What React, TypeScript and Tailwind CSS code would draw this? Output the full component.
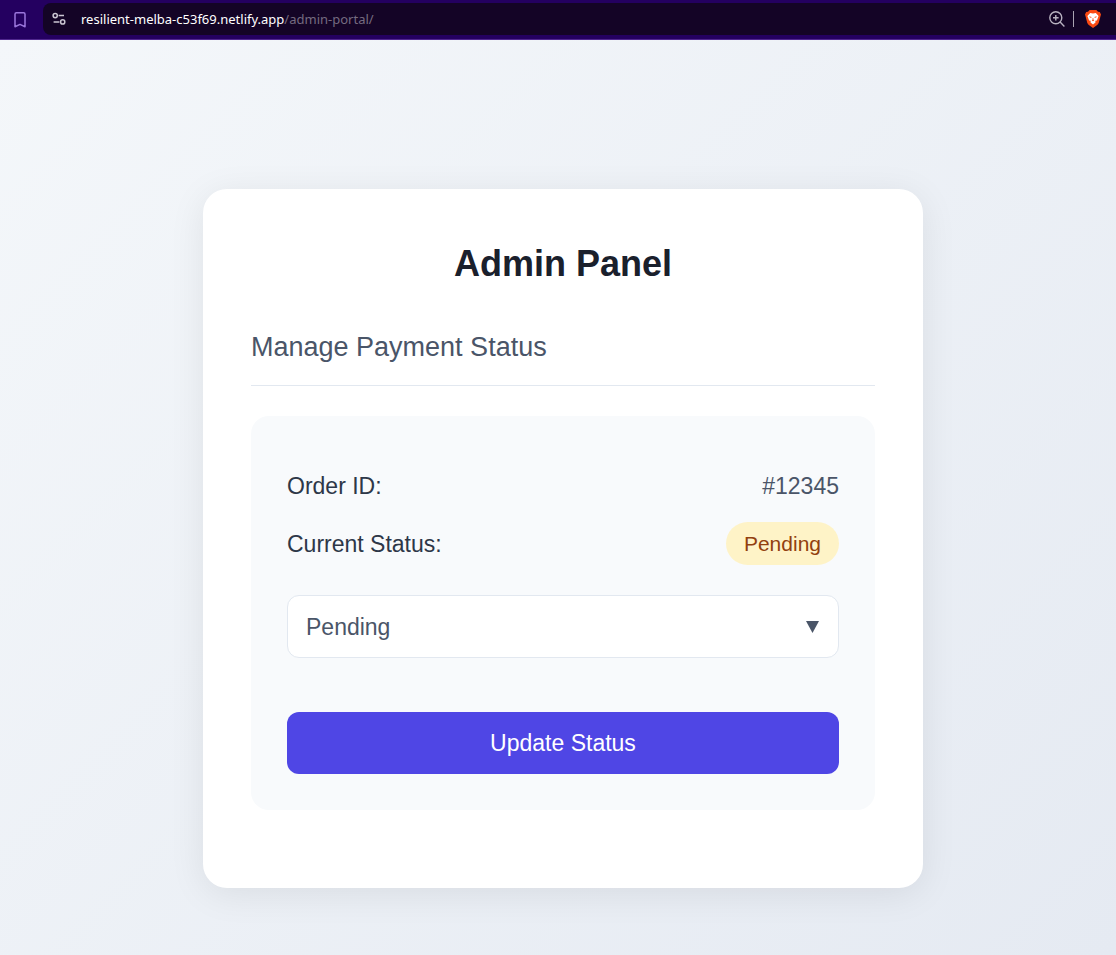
import { useState } from "react";

function BookmarkIcon() {
  return (
    <svg width="12" height="16" viewBox="0 0 12 16" fill="none" stroke="#9b76dc" strokeWidth="1.5" strokeLinejoin="round" aria-hidden="true">
      <path d="M1 2.2Q1 .8 2.4.8H9.6Q11 .8 11 2.2V14.8L6 12.4L1 14.8Z" />
    </svg>
  );
}

function SiteSettingsIcon() {
  return (
    <svg width="14" height="14" viewBox="0 0 14 14" fill="none" stroke="#cbc6d2" strokeWidth="1.5" aria-hidden="true">
      <circle cx="3.2" cy="3.6" r="2.1" />
      <path d="M6.6 3.6H12M1.6 9.9H7.4" />
      <circle cx="10.7" cy="9.9" r="2.1" />
    </svg>
  );
}

function ZoomInIcon() {
  return (
    <svg width="16" height="16" viewBox="0 0 16 16" fill="none" stroke="#b8b2c0" strokeWidth="1.4" aria-hidden="true">
      <circle cx="6.8" cy="6.8" r="6" />
      <path d="M11.1 11.1L15.4 15.4M6.8 4V9.6M4 6.8H9.6" />
    </svg>
  );
}

function ShieldLionIcon() {
  return (
    <svg width="16" height="18" viewBox="0 0 16 18" aria-hidden="true">
      <path d="M4.6 0H11.4L13 1.8L14.8 2L16 4.6L15.4 6.4L13.7 13L12.5 14.8L8 18L3.5 14.8L2.3 13L.6 6.4L0 4.6L1.2 2L3 1.8Z" fill="#fb4a12" />
      <path d="M5.2 3.1L8 3.6L10.8 3.1L13.6 6.1L12.9 7.8L11.9 10.4L10.3 10.8L10.5 12.4L8 14.5L5.5 12.4L5.7 10.8L4.1 10.4L3.1 7.8L2.4 6.1Z" fill="#fff" />
      <path d="M4.2 6.3L6.6 6.9L6.3 7.7L4.9 7.4ZM11.8 6.3L9.4 6.9L9.7 7.7L11.1 7.4ZM7.7 8H8.3L8.5 9.8L9.2 10.5L8 11.2L6.8 10.5L7.5 9.8Z" fill="#fb4a12" />
    </svg>
  );
}

function AddressBar() {
  return (
    <header className="flex h-10 items-center border-b border-[#50278e] bg-[#240060] pl-3.5 font-['Noto_Sans','Open_Sans',sans-serif]">
      <button type="button" aria-label="Bookmark this page" className="mr-[17px] flex w-3">
        <BookmarkIcon />
      </button>
      <div className="mb-0.5 flex h-8 min-w-0 flex-1 items-center rounded-l-lg bg-[#140426] pr-[15px] pl-[9px]">
        <button type="button" aria-label="Site settings" className="mr-[15px]">
          <SiteSettingsIcon />
        </button>
        <p className="min-w-0 flex-1 truncate text-[13px] leading-5 text-[#756b80]">
          <span className="text-white">resilient-melba-c53f69.netlify.app</span>/admin-portal/
        </p>
        <button type="button" aria-label="Zoom" className="mr-2">
          <ZoomInIcon />
        </button>
        <span className="mr-[11px] h-4 w-px bg-[#aaa4b2]" />
        <button type="button" aria-label="Shields">
          <ShieldLionIcon />
        </button>
      </div>
    </header>
  );
}

const statuses = ["Pending", "Processing", "Completed", "Failed"];

export default function App() {
  const [selected, setSelected] = useState("Pending");
  const [current, setCurrent] = useState("Pending");

  return (
    <div className="flex min-h-screen flex-col font-['Liberation_Sans',Arial,sans-serif]">
      <AddressBar />
      <main className="flex flex-1 justify-center bg-linear-135 from-[#f4f7fa] to-[#e5eaf2] pt-[149px] pb-[67px] pl-2.5">
        <section className="w-full max-w-[720px] rounded-3xl bg-white px-12 pt-12 pb-[78px] shadow-[0_6px_36px_rgba(0,0,0,0.08)]">
          <h1 className="text-center text-[36px] leading-[54px] font-bold text-[#1a202c]">Admin Panel</h1>
          <h2 className="mt-9 border-b border-[#e2e8f0] pb-[18px] text-[27px] leading-10 text-[#4a5568]">
            Manage Payment Status
          </h2>
          <form
            className="mt-[30px] rounded-[18px] bg-[#f8fafc] px-9 pt-[52px] pb-9 text-[23px] leading-9"
            onSubmit={(event) => {
              event.preventDefault();
              setCurrent(selected);
            }}
          >
            <div className="flex items-center justify-between">
              <span className="text-[#2d3748]">Order ID:</span>
              <span className="text-[#4a5568]">#12345</span>
            </div>
            <div className="mt-[18px] flex items-center justify-between">
              <label htmlFor="status" className="text-[#2d3748]">Current Status:</label>
              <span className="rounded-full bg-[#fef3c7] px-[18px] py-1.5 text-[21px] leading-[31px] text-[#92400e]">{current}</span>
            </div>
            <div className="relative mt-[30px]">
              <select
                id="status"
                value={selected}
                onChange={(event) => setSelected(event.target.value)}
                className="block h-[63px] w-full appearance-none rounded-xl border border-[#e2e8f0] bg-white px-[18px] text-[23px] text-[#4a5568]"
              >
                {statuses.map((status) => (
                  <option key={status}>{status}</option>
                ))}
              </select>
              <span aria-hidden="true" className="pointer-events-none absolute inset-y-0 right-5 flex items-center text-[#4a5568]">
                <svg width="13" height="12" viewBox="0 0 13 12" fill="currentColor">
                  <path d="M0 0H13L6.5 12Z" />
                </svg>
              </span>
            </div>
            <button type="submit" className="mt-[54px] block h-[62px] w-full rounded-xl bg-[#4f46e5] text-[23px] text-white">
              Update Status
            </button>
          </form>
        </section>
      </main>
    </div>
  );
}
